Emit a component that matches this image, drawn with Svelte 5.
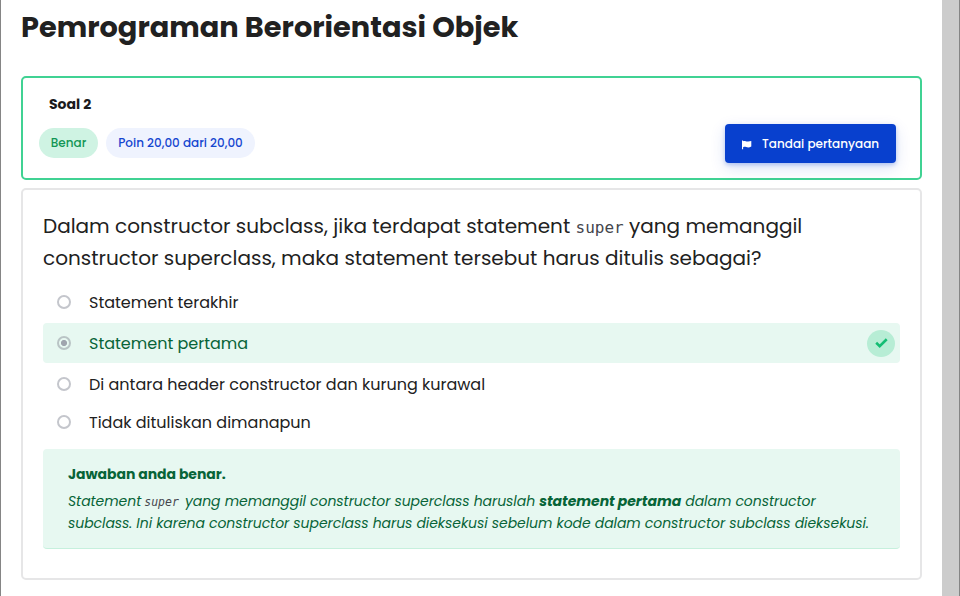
<script>
  const options = [
    { text: 'Statement terakhir', cls: 'first' },
    { text: 'Statement pertama', cls: 'correct', checked: true },
    { text: 'Di antara header constructor dan kurung kurawal', cls: 'third' },
    { text: 'Tidak dituliskan dimanapun', cls: 'fourth' }
  ];
</script>

<div class="page">
  <main>
    <h1>Pemrograman Berorientasi Objek</h1>

    <section class="info">
      <h3>Soal 2</h3>
      <div class="row">
        <span class="pill state">Benar</span>
        <span class="pill grade">Poin 20,00 dari 20,00</span>
        <button type="button">
          <svg width="10" height="10" viewBox="0 0 10 10" fill="#fff" aria-hidden="true">
            <path d="M0 .4h1.1v.8C3 .2 4.1 2.1 6.2 1.5L9.3.9v5.7C7 7.8 5.5 7.5 4.1 7c-1.2-.4-2-.2-3 .2v2H0z" />
          </svg>
          <span>Tandai pertanyaan</span>
        </button>
      </div>
    </section>

    <section class="question">
      <p class="qtext">
        Dalam constructor subclass, jika terdapat statement <code>super</code> yang memanggil<br />constructor superclass, maka statement tersebut harus ditulis sebagai?
      </p>
      <div class="answers">
        {#each options as option}
          <div class="option {option.cls}">
            <span class="radio" class:checked={option.checked}></span>
            <span class="label">{option.text}</span>
            {#if option.checked}
              <span class="tick">
                <svg width="13" height="10" viewBox="0 0 13 10" fill="none" aria-hidden="true">
                  <path d="M1.2 4.8 4.7 8.1 11.7 1.3" stroke="#13bd73" stroke-width="2.6" />
                </svg>
              </span>
            {/if}
          </div>
        {/each}
      </div>
      <div class="feedback">
        <strong class="head">Jawaban anda benar.</strong>
        <p>
          Statement<code>super</code> yang memanggil constructor superclass haruslah <b>statement pertama</b> dalam constructor<br />subclass. Ini karena constructor superclass harus dieksekusi sebelum kode dalam constructor subclass dieksekusi.
        </p>
      </div>
    </section>
  </main>
  <div class="scrollbar"></div>
</div>

<style>
  :global(body) { margin: 0; background: #fff; }
  .page {
    box-sizing: border-box;
    display: flex;
    width: 960px;
    height: 596px;
    overflow: hidden;
    border-left: 1px solid #858585;
    border-right: 1px solid #858585;
    color: #212121;
    font-family: Poppins, Inter, 'Open Sans', sans-serif;
    white-space: nowrap;
  }
  main { flex: 1; min-width: 0; padding: 6px 20px 0; }
  .scrollbar { flex: none; width: 17px; background: #ccc; }
  h1 { margin: 0; height: 70px; font-size: 28.8px; line-height: 43px; font-weight: 700; }
  .info { box-sizing: border-box; height: 104px; border: 2px solid #40d293; border-radius: 5px; padding: 16px 24px 0 16px; }
  h3 { margin: 0 0 0 10px; font-size: 14px; line-height: 21px; height: 30px; font-weight: 700; color: #1b1b1d; }
  .row { display: flex; align-items: flex-start; }
  .pill { box-sizing: border-box; height: 30px; margin-top: 4px; border-radius: 15px; font-size: 12px; line-height: 30px; font-weight: 500; text-align: center; }
  .state { width: 59px; background: #cff3e3; color: #129655; }
  .grade { width: 149px; margin-left: 8px; background: #eff3fe; color: #1546d0; }
  button {
    margin: 0 0 0 auto;
    width: 171px;
    height: 39px;
    border: 0;
    border-radius: 4px;
    background: #0840ce;
    color: #fff;
    font: 500 12px/39px Poppins, Inter, sans-serif;
    letter-spacing: .02px;
    display: flex;
    align-items: center;
    padding: 0 0 0 17px;
    box-shadow: 0 2px 4px #0840ce40, 0 5px 16px #0840ce24;
  }
  button svg { margin: 2px 10px 0 0; }
  .question { box-sizing: border-box; height: 392px; margin-top: 8px; border: 2px solid #e6e6e7; border-radius: 5px; padding: 20px 20px 0; }
  .qtext { margin: 0; height: 73px; font-size: 20px; line-height: 32px; }
  code { font-family: 'DejaVu Sans Mono', monospace; color: #44464d; line-height: 0; }
  .qtext code { font-size: 16px; }
  .option { box-sizing: border-box; display: flex; align-items: center; height: 38px; padding-left: 14px; font-size: 16px; }
  .correct { height: 40px; margin: 2px 0; padding-right: 5px; border-radius: 4px; background: #e7f8f1; color: #076438; }
  .radio { box-sizing: border-box; width: 14px; height: 14px; border: 2px solid #c4c6cc; border-radius: 50%; margin-right: 18px; }
  .checked { background: radial-gradient(circle, #a0a5ae 0 2.7px, transparent 3.4px); border-color: #b9c4c5; }
  .tick { width: 28px; height: 27px; border-radius: 50%; margin-left: auto; background: #b7edd5; display: flex; align-items: center; justify-content: center; }
  .feedback { box-sizing: border-box; height: 100px; margin-top: 8px; padding: 14px 25px 0; border-radius: 4px; border-bottom: 1px solid #c6f0dd; background: #e7f8f1; color: #076438; font-size: 14px; letter-spacing: -.05px; }
  .head { display: block; line-height: 22px; }
  .feedback p { margin: 5px 0 0; line-height: 22px; font-style: italic; }
  .feedback code { font-size: 11.5px; margin: 0 2px 0 3px; letter-spacing: 0; }
</style>
